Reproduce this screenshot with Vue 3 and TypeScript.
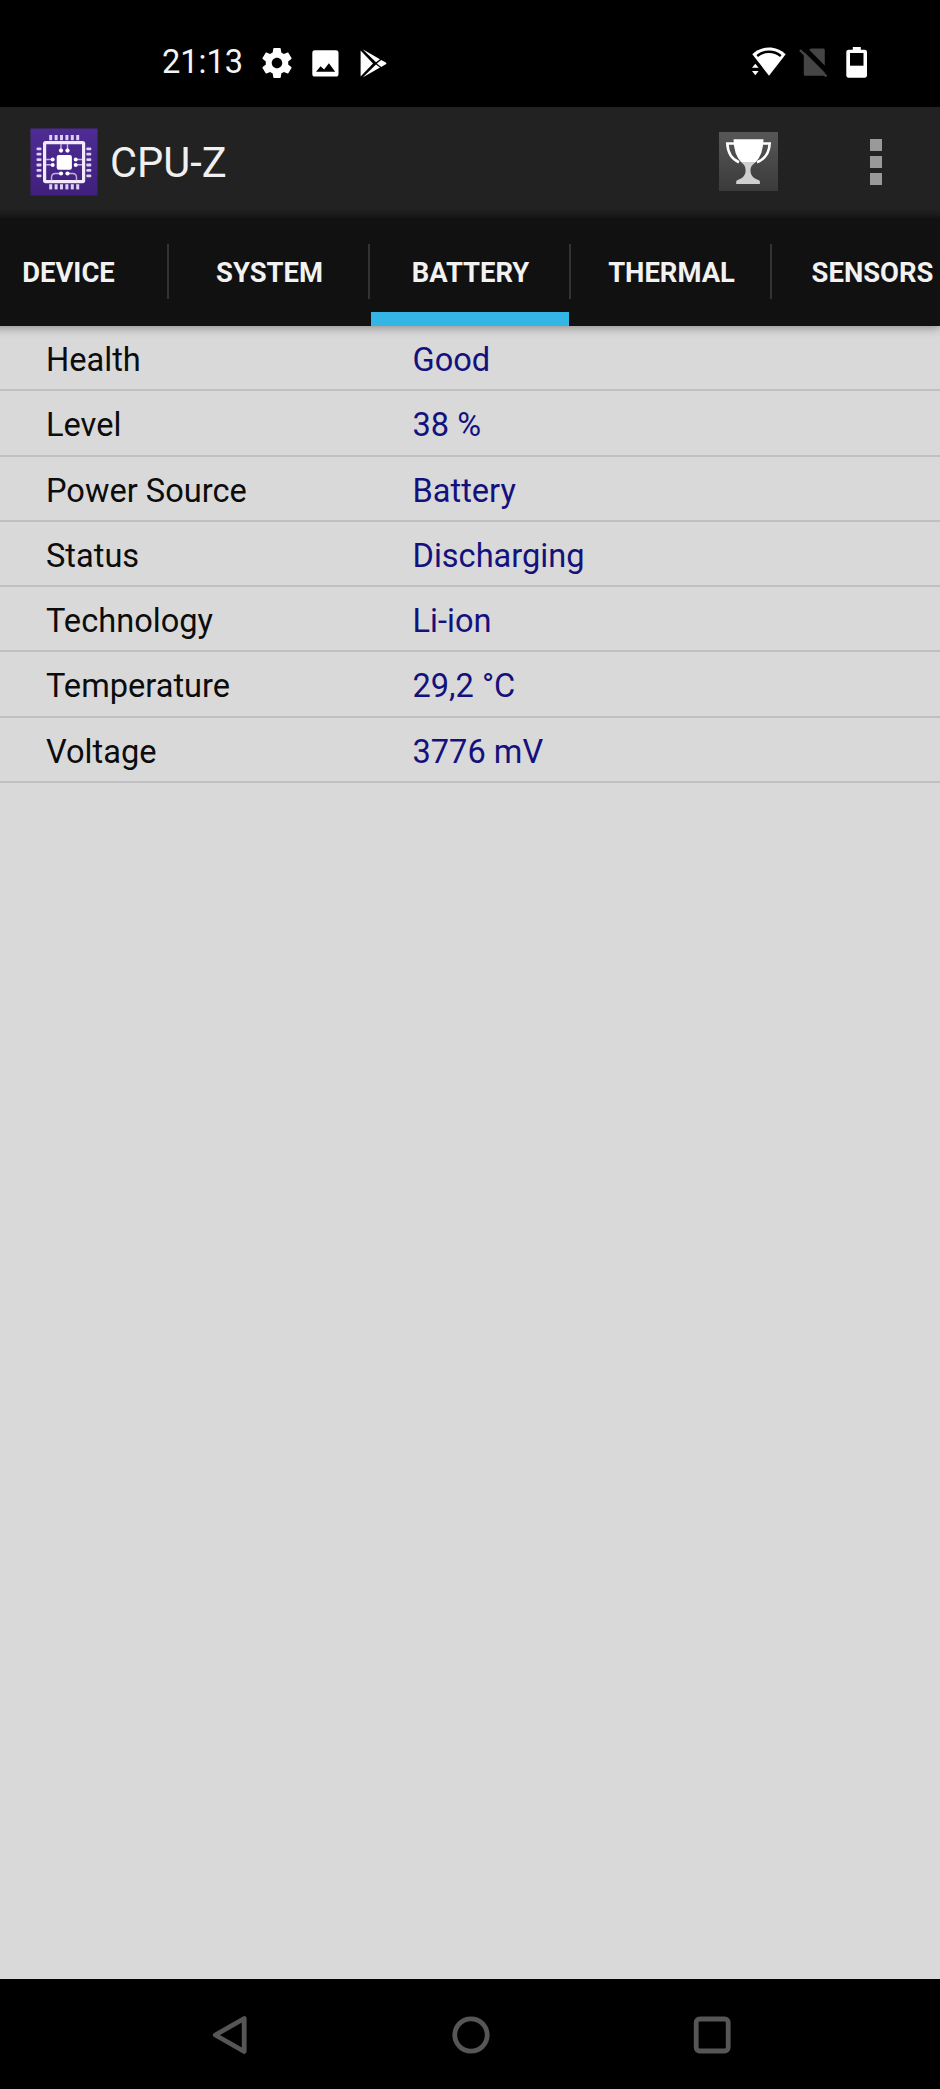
<script setup lang="ts">
interface Reading {
  label: string
  value: string
}

const tabs: string[] = ['DEVICE', 'SYSTEM', 'BATTERY', 'THERMAL', 'SENSORS']
const activeTab = 'BATTERY'

const readings: Reading[] = [
  { label: 'Health', value: 'Good' },
  { label: 'Level', value: '38 %' },
  { label: 'Power Source', value: 'Battery' },
  { label: 'Status', value: 'Discharging' },
  { label: 'Technology', value: 'Li-ion' },
  { label: 'Temperature', value: '29,2 °C' },
  { label: 'Voltage', value: '3776 mV' },
]

const pins: number[] = [20.7, 26.1, 31.5, 36.9, 42.3, 47.7]
</script>

<template>
  <div class="screen">
    <header class="status">
      <span class="clock">21:13</span>
      <svg class="gear" viewBox="0 0 24 24">
        <path d="M19.43 12.98c.04-.32.07-.64.07-.98s-.03-.66-.07-.98l2.11-1.65c.19-.15.24-.42.12-.64l-2-3.46c-.12-.22-.39-.3-.61-.22l-2.49 1c-.52-.4-1.08-.73-1.69-.98l-.38-2.65C14.46 2.18 14.25 2 14 2h-4c-.25 0-.46.18-.49.42l-.38 2.65c-.61.25-1.17.59-1.69.98l-2.49-1c-.23-.09-.49 0-.61.22l-2 3.46c-.13.22-.07.49.12.64l2.11 1.65c-.04.32-.07.65-.07.98s.03.66.07.98l-2.11 1.65c-.19.15-.24.42-.12.64l2 3.46c.12.22.39.3.61.22l2.49-1c.52.4 1.08.73 1.69.98l.38 2.65c.03.24.24.42.49.42h4c.25 0 .46-.18.49-.42l.38-2.65c.61-.25 1.17-.59 1.69-.98l2.49 1c.23.09.49 0 .61-.22l2-3.46c.12-.22.07-.49-.12-.64l-2.11-1.65zM12 15.5c-1.93 0-3.5-1.57-3.5-3.5s1.57-3.5 3.5-3.5 3.5 1.57 3.5 3.5-1.57 3.5-3.5 3.5z" />
      </svg>
      <svg class="photo" viewBox="0 0 27 27">
        <rect x=".3" y=".3" width="26.2" height="26.2" rx="2.6" />
        <path d="M4 21.8l4.6-5.500 3.5 3.300 4.8-6.400 6.3 8.600z" fill="#000" />
      </svg>
      <svg class="play" viewBox="0 0 27 29">
        <path d="M.6 1.6v25.8L13 14.4z" />
        <path d="M2.6.3L20 10.2l-4 3.1z" />
        <path d="M2.6 28.5L20 18.6l-4-3.2z" />
        <path d="M21.2 10.9l4.6 2.6c.8.5.8 1.3 0 1.8l-4.6 2.6-4.4-3.5z" />
      </svg>
      <span class="grow"></span>
      <svg class="wifi" viewBox="0 0 34 31">
        <path d="M.3 7.3C9.6-1.7 24.4-1.7 33.7 7.3L17 28.8z" />
        <path d="M5.2 8.9C12.1 3.4 21.9 3.4 28.8 8.9" fill="none" stroke="#000" stroke-width="2.5" />
        <path d="M-.5 15.800h7.200l3.1 4v9H-.5z" fill="#000" />
        <path d="M0 20.800h6.600L3.300 16.700zM0 24h6.600L3.300 28.200z" />
      </svg>
      <svg class="sim" viewBox="0 0 30 31">
        <path d="M4.800 6L12 1.500h12.200c1 0 1.600.6 1.600 1.600V28.800H6.400c-1 0-1.600-.6-1.600-1.600z" />
        <path d="M2-1.800L30.500 26.700" fill="none" stroke="#000" stroke-width="5" />
        <path d="M1 3l26.500 26.500" fill="none" stroke="#454545" stroke-width="2.400" />
      </svg>
      <svg class="cell" viewBox="0 0 22 32">
        <path d="M6.800 0h8v2.800h4c1.200 0 2.200 1 2.200 2.200v23.600c0 1.200-1 2.200-2.200 2.200H2.500C1.300 30.800.3 29.800.3 28.600V5c0-1.200 1-2.200 2.200-2.200h4.300z" />
        <path d="M4 6h13.500v12.700H4z" fill="#000" />
      </svg>
    </header>

    <div class="appbar">
      <svg class="logo" viewBox="0 0 68 68">
        <defs>
          <linearGradient id="violet" x1="0" y1="0" x2="0" y2="1">
            <stop offset="0" stop-color="#4e2c94" />
            <stop offset="1" stop-color="#40207c" />
          </linearGradient>
        </defs>
        <rect x=".5" y=".5" width="67" height="67" fill="url(#violet)" />
        <g fill="#ddd0f2">
          <template v-for="p in pins" :key="p">
            <rect :x="p - 1.5" y="7" width="3" height="5.2" />
            <rect :x="p - 1.5" y="56.2" width="3" height="5.2" />
            <rect x="6.5" :y="p - 1.3" width="5" height="2.8" rx="1" />
            <rect x="56.3" :y="p - 1.3" width="5" height="2.8" rx="1" />
          </template>
        </g>
        <rect x="14.6" y="14.6" width="39" height="39" rx="1" fill="none" stroke="#f1eafb" stroke-width="3.200" />
        <rect x="26.7" y="27" width="15.2" height="14.8" rx="2" fill="#fff" />
        <g fill="none" stroke="#c4b0e6" stroke-width="1.4">
          <path d="M31 16v6M37.5 16v6M16 31.5h6M16 36.8h6M46 31.5h6M46 36.8h6" />
          <path d="M31 45.5h-5.5q-4 0-4 4v3M37.5 45.5h5q4 0 4 4v3" />
        </g>
        <g fill="#fff">
          <circle cx="31" cy="22.6" r="2.1" /><circle cx="37.5" cy="22.6" r="2.1" />
          <circle cx="31" cy="45.5" r="2.1" /><circle cx="37.5" cy="45.5" r="2.1" />
          <circle cx="22.7" cy="31.5" r="2" /><circle cx="22.7" cy="37" r="2" />
          <circle cx="45.7" cy="31.5" r="2" /><circle cx="45.7" cy="37" r="2" />
        </g>
      </svg>
      <h1 class="title">CPU-Z</h1>
      <span class="grow"></span>
      <svg class="trophy" viewBox="0 0 59 59">
        <defs>
          <linearGradient id="plate" x1="0" y1="0" x2="0" y2="1">
            <stop offset="0" stop-color="#575757" />
            <stop offset="1" stop-color="#3b3b3b" />
          </linearGradient>
        </defs>
        <rect width="59" height="59" fill="url(#plate)" />
        <path d="M16 11.5H8.300Q9 25.500 20 30.300M42 11.500h8.700Q50 25.500 38 30.300" fill="none" stroke="#fff" stroke-width="2.600" />
        <path d="M14.500 7.300h30Q44.200 22.500 36.800 30H22Q14.800 22.500 14.500 7.300z" fill="#fff" />
        <path d="M22 30h14.800c-3 2.500-5.300 4.200-5.300 8.500 0 5.500 4 8.300 8.300 9.700.8.300 1.100 1 1.100 1.800v2H17.200v-2c0-.8.300-1.500 1.100-1.800 4.300-1.400 8.300-4.200 8.300-9.700 0-4.300-1.600-6-4.600-8.500z" fill="#cfcfcf" />
      </svg>
      <div class="more"><i></i><i></i><i></i></div>
    </div>

    <nav class="tabs">
      <div v-for="t in tabs" :key="t" class="tab" :class="{ active: t === activeTab }">
        <span>{{ t }}</span>
      </div>
    </nav>

    <main class="list">
      <div v-for="r in readings" :key="r.label" class="row">
        <span class="label">{{ r.label }}</span>
        <span class="value">{{ r.value }}</span>
      </div>
    </main>

    <footer class="navbar">
      <svg viewBox="0 0 40 42"><path d="M34.2 4.500v33L5.300 21z" /></svg>
      <svg viewBox="0 0 40 42"><circle cx="20" cy="21" r="16.200" /></svg>
      <svg viewBox="0 0 40 42"><rect x="4.200" y="5" width="32" height="32" rx="3.500" /></svg>
    </footer>
  </div>
</template>

<style>
body {
  margin: 0;
  background: #000;
}
</style>

<style scoped>
.screen {
  width: 940px;
  height: 2089px;
  display: flex;
  flex-direction: column;
  overflow: hidden;
  background: #d9d9d9;
  font-family: Roboto, "Liberation Sans", sans-serif;
}
svg {
  display: block;
  flex: none;
}
.grow {
  flex: 1;
}
.status {
  flex: none;
  height: 107px;
  box-sizing: border-box;
  padding: 0 72px 0 162px;
  display: flex;
  align-items: flex-start;
  background: #000;
  fill: #fff;
}
.clock {
  width: 97px;
  margin-top: 43px;
  font-size: 32.600px;
  line-height: 38px;
  color: #f4f4f4;
  white-space: nowrap;
}
.gear {
  width: 36px;
  height: 36px;
  margin-top: 45px;
}
.photo {
  width: 27px;
  height: 27px;
  margin: 50px 0 0 17px;
}
.play {
  width: 27px;
  height: 29px;
  margin: 49px 0 0 21px;
}
.wifi {
  width: 34px;
  height: 31px;
  margin-top: 47px;
}
.sim {
  width: 30px;
  height: 31px;
  margin: 47px 0 0 13px;
  fill: #454545;
}
.cell {
  width: 22px;
  height: 32px;
  margin: 47px 0 0 17px;
}
.appbar {
  flex: none;
  height: 111px;
  box-sizing: border-box;
  padding: 0 58px 0 30px;
  display: flex;
  align-items: flex-start;
  background: linear-gradient(#222 0 102px, #181818 110px);
}
.logo {
  width: 68px;
  height: 68px;
  margin-top: 21px;
}
.title {
  margin: 32px 0 0 12px;
  font-size: 41.600px;
  line-height: 48px;
  font-weight: 400;
  color: #f0f0f0;
}
.trophy {
  width: 59px;
  height: 59px;
  margin-top: 25px;
}
.more {
  margin: 32px 0 0 92px;
  display: grid;
  gap: 5px;
}
.more i {
  width: 12px;
  height: 12px;
  background: #999;
}
.tabs {
  position: relative;
  z-index: 1;
  flex: none;
  height: 108px;
  display: flex;
  margin-left: -32px;
  background: #111;
  box-shadow: 0 2px 9px rgba(0, 0, 0, 0.35);
}
.tab {
  position: relative;
  flex: none;
  width: 201px;
  box-sizing: border-box;
  padding-top: 39px;
  text-align: center;
  font-size: 27.400px;
  line-height: 32px;
  font-weight: 700;
  color: #f2f2f2;
  background: linear-gradient(#333, #333) right 0 top 26px / 2px 55px no-repeat;
}
.tab.active::after {
  content: "";
  position: absolute;
  left: 1px;
  right: 2px;
  bottom: 0;
  height: 14px;
  background: #33b5e5;
}
.list {
  flex: 1;
}
.row {
  height: 65.300px;
  box-sizing: border-box;
  border-bottom: 2px solid #c0c0c0;
  padding: 15px 0 0 46px;
  display: flex;
  font-size: 32.600px;
  line-height: 38px;
  color: #0c0c0c;
}
.label {
  width: 366.500px;
}
.value {
  color: #15117c;
}
.navbar {
  flex: none;
  height: 110px;
  box-sizing: border-box;
  padding: 35px 208px 0 210px;
  display: flex;
  justify-content: space-between;
  background: #000;
  fill: none;
  stroke: #565656;
  stroke-width: 4.800;
  stroke-linejoin: round;
}
.navbar svg {
  width: 40px;
  height: 42px;
}
</style>
